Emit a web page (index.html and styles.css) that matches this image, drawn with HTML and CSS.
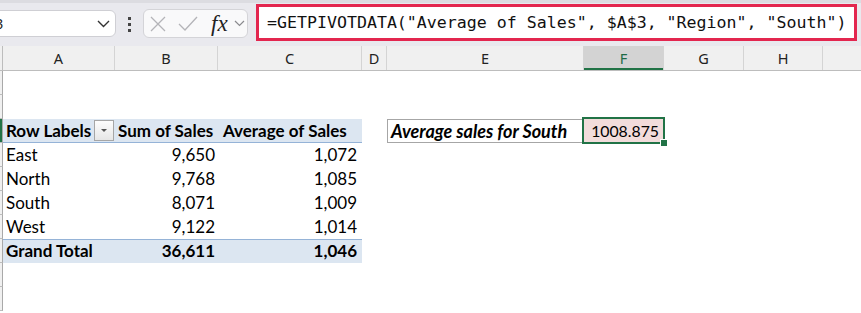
FILE: index.html
```html
<!DOCTYPE html>
<html lang="en">
<head>
    <meta charset="UTF-8">
    <title>GETPIVOTDATA - Average sales</title>
    <link rel="stylesheet" href="styles.css">
</head>
<body>
    <div class="toolbar">
        <div class="namebox">
            <span>F3</span>
            <svg width="13" height="8" viewBox="0 0 13 8"><polyline points="1,1 6.5,6.5 12,1" fill="none" stroke="#333" stroke-width="1.4"/></svg>
        </div>
        <div class="grip"><i></i><i></i><i></i></div>
        <div class="fxbox">
            <svg class="ic-x" width="16" height="16" viewBox="0 0 16 16"><path d="M1 1L15 15M15 1L1 15" stroke="#b4b4b8" stroke-width="1.3"/></svg>
            <svg class="ic-ok" width="20" height="15" viewBox="0 0 20 15"><polyline points="1,8 7,14 19,1" fill="none" stroke="#b4b4b8" stroke-width="1.3"/></svg>
            <span class="fx">fx</span>
            <svg class="ic-dd" width="11" height="7" viewBox="0 0 11 7"><polyline points="1,1 5.5,5.5 10,1" fill="none" stroke="#8a8a8e" stroke-width="1.2"/></svg>
        </div>
        <div class="formula">=GETPIVOTDATA("Average of Sales", $A$3, "Region", "South")</div>
    </div>

    <div class="colheads">
        <div class="ch w-rh"></div>
        <div class="ch w-a">A</div>
        <div class="ch w-b">B</div>
        <div class="ch w-c">C</div>
        <div class="ch w-d">D</div>
        <div class="ch w-e">E</div>
        <div class="ch w-f active">F</div>
        <div class="ch w-g">G</div>
        <div class="ch w-h">H</div>
        <div class="ch w-i"></div>
    </div>

    <div class="sheet">
        <div class="row"><div class="rh"></div></div>
        <div class="row"><div class="rh"></div></div>
        <div class="row">
            <div class="rh sel"></div>
            <div class="cell w-a pv-head labels">Row Labels <span class="dd-btn"></span></div>
            <div class="cell w-b pv-head">Sum of Sales</div>
            <div class="cell w-c pv-head head-c">Average of Sales</div>
            <div class="cell w-d"></div>
            <div class="cell w-e boxed">Average sales for South</div>
            <div class="cell w-f num result">1008.875</div>
        </div>
        <div class="row">
            <div class="rh"></div>
            <div class="cell w-a">East</div>
            <div class="cell w-b num">9,650</div>
            <div class="cell w-c num">1,072</div>
        </div>
        <div class="row">
            <div class="rh"></div>
            <div class="cell w-a">North</div>
            <div class="cell w-b num">9,768</div>
            <div class="cell w-c num">1,085</div>
        </div>
        <div class="row">
            <div class="rh"></div>
            <div class="cell w-a">South</div>
            <div class="cell w-b num">8,071</div>
            <div class="cell w-c num">1,009</div>
        </div>
        <div class="row">
            <div class="rh"></div>
            <div class="cell w-a">West</div>
            <div class="cell w-b num">9,122</div>
            <div class="cell w-c num">1,014</div>
        </div>
        <div class="row">
            <div class="rh"></div>
            <div class="cell w-a pv-total">Grand Total</div>
            <div class="cell w-b num pv-total">36,611</div>
            <div class="cell w-c num pv-total">1,046</div>
        </div>
        <div class="row"><div class="rh"></div></div>
        <div class="row"><div class="rh"></div></div>
    </div>
</body>
</html>
```

FILE: styles.css
```css
* {
    box-sizing: border-box;
}
body {
    margin: 0;
    width: 861px;
    height: 313px;
    overflow: hidden;
    background: #fff;
    font-family: Lato, "Liberation Sans", sans-serif;
    color: #000;
}

/* formula bar */
.toolbar {
    height: 46px;
    display: flex;
    align-items: flex-start;
    background: linear-gradient(#dcdce1 0, #dcdce1 3px, #e9e9ee 3px);
}
.namebox {
    margin-left: -30px;
    margin-top: 10px;
    width: 146px;
    height: 27px;
    display: flex;
    align-items: center;
    justify-content: space-between;
    padding: 0 5px 0 17px;
    background: #fff;
    border: 1px solid #cfcfd4;
    border-radius: 6px;
    font: 14px "Noto Sans", sans-serif;
    color: #222;
}
.grip {
    margin-left: 12px;
    margin-top: 17px;
    display: flex;
    flex-direction: column;
    gap: 3px;
}
.grip i {
    display: block;
    width: 3px;
    height: 3px;
    background: #444;
}
.fxbox {
    margin-left: 12px;
    margin-top: 9px;
    width: 105px;
    height: 29px;
    display: flex;
    align-items: center;
    padding-left: 6px;
    background: #f9f9fa;
    border: 1px solid #d4d4d8;
    border-radius: 6px;
}
.ic-ok {
    margin-left: 12px;
}
.fx {
    margin-left: 13px;
    font: italic 23px "Liberation Serif", serif;
    color: #222;
    line-height: 20px;
}
.ic-dd {
    margin-left: 6px;
}
.formula {
    margin-left: 8px;
    margin-top: 4px;
    width: 601px;
    height: 37px;
    padding-left: 8px;
    background: #fff;
    border: 3px solid #e3264f;
    font: 16.6px "DejaVu Sans Mono", monospace;
    line-height: 31px;
    white-space: nowrap;
    color: #111;
}

/* column widths */
.w-rh { width: 3px; }
.w-a { width: 112px; }
.w-b { width: 103px; }
.w-c { width: 144px; }
.w-d { width: 25px; }
.w-e { width: 197px; }
.w-f { width: 80px; }
.w-g { width: 80px; }
.w-h { width: 79px; }
.w-i { width: 80px; }

.colheads {
    display: flex;
    height: 25px;
    background: #f0f0f0;
    border-bottom: 1px solid #bdbdbd;
}
.ch {
    flex-shrink: 0;
    border-right: 1px solid #d4d4d4;
    text-align: center;
    font: 14.5px "Noto Sans", sans-serif;
    line-height: 24px;
    color: #222;
}
.ch.w-rh {
    border-right-color: #bdbdbd;
}
.ch.active {
    background: #d3d3d3;
    color: #1d6b45;
    box-shadow: inset 0 -2px #217346;
}

/* cells */
.row {
    display: flex;
    height: 24px;
}
.rh {
    width: 3px;
    flex-shrink: 0;
    background: #f0f0f0;
    border-right: 1px solid #a9a9a9;
    border-bottom: 1px solid #bdbdbd;
}
.rh.sel {
    background: #217346;
}
.cell {
    flex-shrink: 0;
    padding: 0 3px;
    font-size: 17px;
    line-height: 24px;
    white-space: nowrap;
}
.num {
    text-align: right;
    padding-right: 3px;
}
.w-c.num {
    padding-right: 5px;
}
.pv-head {
    background: #dce6f1;
    border-bottom: 1px solid #95b3d7;
    font-weight: bold;
    line-height: 23px;
}
.head-c {
    padding-left: 5px;
}
.labels {
    display: flex;
    justify-content: space-between;
    align-items: center;
    padding-right: 1px;
}
.dd-btn {
    width: 20px;
    height: 21px;
    border: 1px solid #a6a6a6;
    background: linear-gradient(#fdfdfd, #e6e6e6);
    display: flex;
    align-items: center;
    justify-content: center;
}
.dd-btn::after {
    content: "";
    border-left: 3px solid transparent;
    border-right: 3px solid transparent;
    border-top: 3px solid #555;
}
.pv-total {
    background: #dce6f1;
    border-top: 1px solid #95b3d7;
    font-weight: bold;
    line-height: 22px;
}
.boxed {
    border: 1px solid #a6a6a6;
    font-size: 18px;
    font-weight: bold;
    font-style: italic;
    line-height: 22px;
}
.result {
    position: relative;
    background: #f2dcdb;
    font-size: 15.8px;
    padding-right: 5px;
}
.result::after {
    content: "";
    position: absolute;
    left: -2px;
    top: -2px;
    right: -1px;
    bottom: -1px;
    border: 2px solid #217346;
}
.result::before {
    content: "";
    position: absolute;
    right: -4px;
    bottom: -4px;
    width: 6px;
    height: 6px;
    background: #217346;
    border: 1px solid #fff;
    z-index: 1;
}
```
